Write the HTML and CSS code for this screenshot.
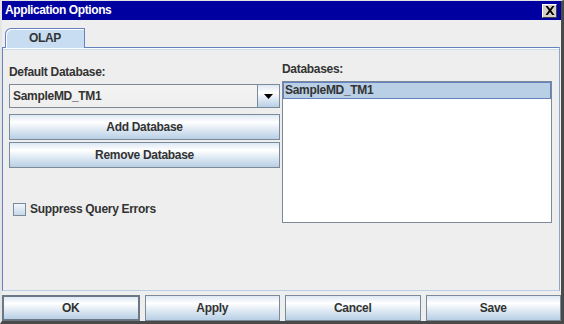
FILE: index.html
```html
<!DOCTYPE html>
<html lang="en">
<head>
    <meta charset="UTF-8">
    <title>Application Options</title>
    <link rel="stylesheet" href="styles.css">
</head>
<body>
    <div class="window">
        <div class="titlebar">
            <span class="title">Application Options</span>
            <button class="close-btn">
                <svg width="10" height="9" viewBox="0 0 10 9">
                    <path d="M0.5 0h2.2l2.3 3.1 2.3-3.1h2.2L6.2 4.5 9.5 9H7.3L5 5.9 2.7 9H0.5l3.3-4.5z" fill="#000"/>
                </svg>
            </button>
        </div>

        <div class="dialog-body">
            <div class="tabs">
                <div class="tab">OLAP</div>
            </div>

            <div class="panel">
                <div class="col col-left">
                    <div class="field-label">Default Database:</div>
                    <div class="combo">
                        <div class="combo-value">SampleMD_TM1</div>
                        <div class="combo-arrow">
                            <svg width="9" height="5" viewBox="0 0 9 5"><path d="M0 0h9L4.5 5z" fill="#000"/></svg>
                        </div>
                    </div>
                    <button class="btn btn-wide">Add Database</button>
                    <button class="btn btn-wide">Remove Database</button>
                    <label class="check">
                        <span class="check-box"></span>
                        Suppress Query Errors
                    </label>
                </div>

                <div class="col col-right">
                    <div class="field-label">Databases:</div>
                    <div class="list">
                        <div class="list-item selected">SampleMD_TM1</div>
                    </div>
                </div>
            </div>

            <div class="actions">
                <button class="btn btn-action default">OK</button>
                <button class="btn btn-action">Apply</button>
                <button class="btn btn-action">Cancel</button>
                <button class="btn btn-action">Save</button>
            </div>
        </div>
    </div>
</body>
</html>
```

FILE: styles.css
```css
* {
    margin: 0;
    padding: 0;
    box-sizing: border-box;
}

body {
    font-family: 'Liberation Sans', Arial, sans-serif;
    font-size: 12px;
    letter-spacing: -0.3px;
    font-weight: bold;
    color: #333333;
    background: #eeeeee;
}

.window {
    width: 564px;
    height: 324px;
    background: #eeeeee;
    border-top: 1px solid #e4e4e4;
    border-left: 2px solid #e4e4e4;
    border-right: 3px solid #4a4a4a;
    border-bottom: 3px solid #4a4a4a;
    display: flex;
    flex-direction: column;
}

/* title bar */
.titlebar {
    height: 19px;
    background: #0000a0;
    display: flex;
    align-items: center;
    justify-content: space-between;
    padding: 0 4px 0 3px;
}

.title {
    color: #ffffff;
    font-size: 12px;
    letter-spacing: -0.4px;
    line-height: 19px;
}

.close-btn {
    width: 15px;
    height: 14px;
    background: #d4d0c8;
    border: 1px solid;
    border-color: #ffffff #404040 #404040 #ffffff;
    display: flex;
    align-items: center;
    justify-content: center;
}

.dialog-body {
    flex: 1;
    display: flex;
    flex-direction: column;
}

/* tabs */
.tabs {
    display: flex;
    padding: 8px 0 0 3px;
}

.tab {
    position: relative;
    z-index: 1;
    width: 80px;
    height: 20px;
    margin-bottom: -1px;
    background: #c8ddf2;
    border: 1px solid #6382bf;
    border-bottom: none;
    border-top-left-radius: 6px;
    box-shadow: inset 1px 1px 0 #ffffff;
    text-align: center;
    line-height: 19px;
}

.panel {
    height: 244px;
    margin-right: 1px;
    border: 1px solid #6382bf;
    border-right-color: #8fa6c4;
    border-bottom-color: #b8cfe5;
    box-shadow: inset 0 1px 0 #ffffff, inset 0 2px 0 #c8ddf2;
    padding: 14px 7px 0 6px;
    display: flex;
    gap: 2px;
}

.col {
    display: flex;
    flex-direction: column;
}

.col-left {
    width: 271px;
    padding-top: 3px;
}

.col-right {
    width: 270px;
}

.field-label {
    line-height: 14px;
    margin-bottom: 5px;
}

/* combo box */
.combo {
    height: 24px;
    margin-bottom: 6px;
    display: flex;
    border: 1px solid #7a8a99;
    background: linear-gradient(#f4f4f4, #eeeeee);
}

.combo-value {
    flex: 1;
    padding-left: 3px;
    line-height: 22px;
}

.combo-arrow {
    width: 22px;
    border-left: 1px solid #7a8a99;
    background: linear-gradient(#dde8f3 0%, #ffffff 35%, #dde8f3 65%, #b8cfe5 100%);
    display: flex;
    align-items: center;
    justify-content: center;
    padding-top: 1px;
}

/* buttons */
.btn {
    font-family: inherit;
    font-weight: bold;
    font-size: 12px;
    letter-spacing: -0.3px;
    color: #333333;
    border: 1px solid #7a8a99;
    background: linear-gradient(#dde8f3 0%, #ffffff 30%, #dde8f3 62%, #b8cfe5 100%);
    text-align: center;
}

.btn-wide {
    height: 26px;
    margin-bottom: 2px;
}

.check {
    display: flex;
    align-items: center;
    gap: 4px;
    margin-top: 32px;
    padding-left: 4px;
    line-height: 14px;
}

.check-box {
    width: 13px;
    height: 13px;
    border: 1px solid #7a8a99;
    background: linear-gradient(#f2f6fb, #c8d8ea);
}

/* list */
.list {
    height: 142px;
    background: #ffffff;
    border: 1px solid #7a8a99;
}

.list-item {
    height: 17px;
    padding-left: 1px;
    line-height: 15px;
}

.list-item.selected {
    background: #b8cfe5;
    border: 1px solid #6382bf;
}

/* bottom buttons */
.actions {
    display: flex;
    gap: 5px;
    margin-top: 4px;
}

.btn-action {
    flex: 1;
    height: 26px;
}

.btn-action.default {
    border: 2px solid #6b7785;
}
```
